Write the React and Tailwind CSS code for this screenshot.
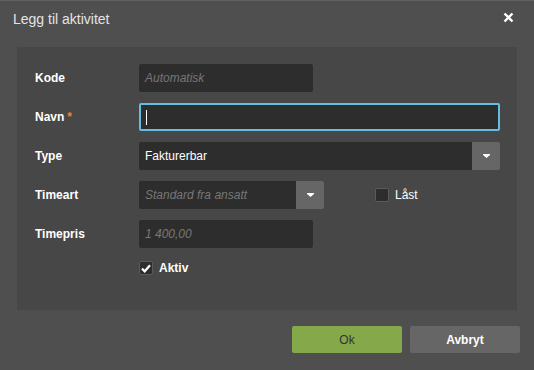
import React from 'react';

const Caret = () => (
  <div className="w-[28px] h-full bg-[#666] flex items-center justify-center">
    <svg width="7" height="4" viewBox="0 0 7 4"><path d="M0 0h7v1L3.5 4 0 1z" fill="#fff" /></svg>
  </div>
);

const Check = ({ checked }) => (
  <div className="w-[14px] h-[14px] rounded-[2px] bg-[#2d2d2d] border border-[#5a5a5a] flex items-center justify-center">
    {checked && (
      <svg width="10" height="9" viewBox="0 0 10 9"><path d="M1 4.6l2.7 2.7L9 1.3" fill="none" stroke="#fff" strokeWidth="2.2" /></svg>
    )}
  </div>
);

const Row = ({ label, required, children }) => (
  <div className="flex items-center h-[28px] mb-[11px]">
    <div className="w-[104px] text-[12px] font-bold text-white">
      {label}
      {required && <span className="text-[#e8862d] ml-[3px]">*</span>}
    </div>
    {children}
  </div>
);

const App = () => {
  return (
    <div className="w-[534px] h-[370px] bg-[#4f4f4f] border-t border-[#626262] flex flex-col" style={{ fontFamily: '"Liberation Sans", Arial, sans-serif' }}>
      {/* header */}
      <div className="h-[46px] flex justify-between pl-[13px] pr-[20px] pt-[8px]">
        <span className="text-[14px] text-[#e4e4e4]">Legg til aktivitet</span>
        <svg className="mt-[3px]" width="11" height="11" viewBox="0 0 11 11"><path d="M1.5 1.5l8 8M9.5 1.5l-8 8" stroke="#fff" strokeWidth="2.4" /></svg>
      </div>

      {/* form panel */}
      <div className="mx-[17px] h-[263px] bg-[#474747] pl-[18px] pt-[17px] pr-[17px]">
        <Row label="Kode">
          <div className="w-[174px] h-full bg-[#2d2d2d] rounded-[2px] flex items-center px-[6px] text-[12px] italic text-[#777]">Automatisk</div>
        </Row>
        <Row label="Navn" required>
          <div className="flex-1 h-full bg-[#2d2d2d] rounded-[2px] border-2 border-[#62bfe2] flex items-center px-[5px]">
            <div className="w-[1px] h-[15px] bg-white" />
          </div>
        </Row>
        <Row label="Type">
          <div className="flex-1 h-full flex rounded-[2px] overflow-hidden">
            <div className="flex-1 bg-[#2d2d2d] flex items-center px-[6px] text-[12px] text-white">Fakturerbar</div>
            <Caret />
          </div>
        </Row>
        <Row label="Timeart">
          <div className="w-[185px] h-full flex rounded-[2px] overflow-hidden">
            <div className="flex-1 bg-[#2d2d2d] flex items-center px-[6px] text-[12px] italic text-[#777]">Standard fra ansatt</div>
            <Caret />
          </div>
          <div className="ml-[51px] flex items-center gap-[6px]">
            <Check />
            <span className="text-[12px] text-white">Låst</span>
          </div>
        </Row>
        <Row label="Timepris">
          <div className="w-[174px] h-full bg-[#2d2d2d] rounded-[2px] flex items-center px-[6px] text-[12px] italic text-[#777]">1 400,00</div>
        </Row>
        <div className="flex items-center gap-[6px] ml-[104px] mt-[9px]">
          <Check checked />
          <span className="text-[12px] font-bold text-white">Aktiv</span>
        </div>
      </div>

      {/* footer */}
      <div className="flex justify-end gap-[8px] pr-[14px] pt-[16px]">
        <button className="w-[110px] h-[27px] rounded-[2px] bg-[#84a84a] text-[12px] text-[#333]">Ok</button>
        <button className="w-[110px] h-[27px] rounded-[2px] bg-[#666] text-[12px] font-bold text-white">Avbryt</button>
      </div>
    </div>
  );
};

export default App;
